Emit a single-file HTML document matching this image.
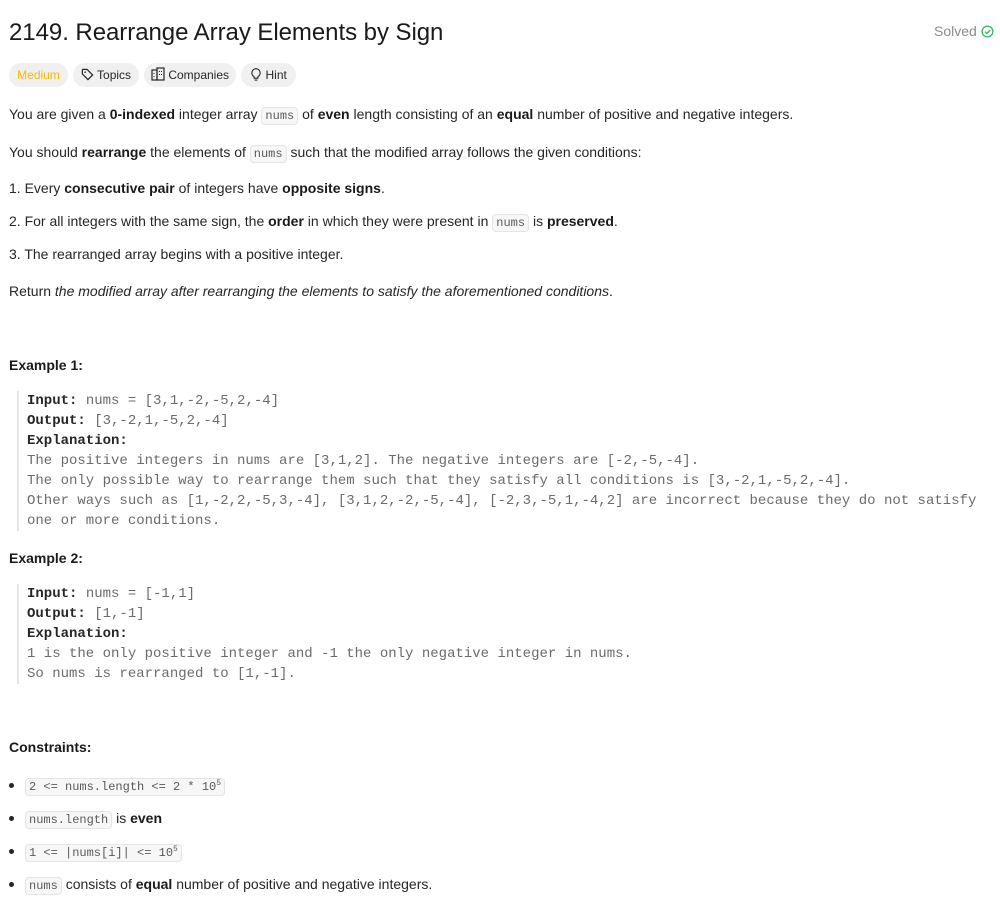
<!DOCTYPE html>
<html><head><meta charset="utf-8"><style>
body{margin:0;background:#fff;width:1000px;height:906px;position:relative;font-family:"Liberation Sans",sans-serif;font-size:14px;color:#262626;overflow:hidden}
.a{position:absolute;white-space:nowrap;line-height:20px}
code{font-family:"Liberation Mono",monospace;font-size:12px;background:#f7f7f8;border:1px solid #e5e5e5;border-radius:4px;padding:1px 3px;color:#5a5a5a}
sup{font-size:8px;line-height:0;vertical-align:5px}
b{font-weight:bold;color:#1a1a1a}
.tag{position:absolute;top:63px;height:24px;background:#f0f0f0;border-radius:12px;font-size:12px;line-height:24px;text-align:center;color:#262626;white-space:nowrap}
.pre{position:absolute;left:17px;border-left:2px solid #e5e5e5;padding-left:8px;font-family:"Liberation Mono",monospace;font-size:14px;line-height:20px;color:#6b6b6b;white-space:pre}
.pre b{color:#262626}
.dot{position:absolute;left:9px;width:5px;height:5px;border-radius:50%;background:#262626}
</style></head><body>
<div class="a" style="left:9px;top:17px;font-size:24px;line-height:32px;color:#1a1a1a;letter-spacing:-0.05px">2149. Rearrange Array Elements by Sign</div>
<div class="a" style="left:934px;top:21px;font-size:14px;color:#8c8c8c">Solved <svg width="13" height="13" viewBox="0 0 14 14" style="vertical-align:-2px"><circle cx="7" cy="7" r="5.8" fill="none" stroke="#2cbb5d" stroke-width="1.4"/><path d="M4.3 7.2l2 2 3.6-3.8" fill="none" stroke="#2cbb5d" stroke-width="1.4"/></svg></div>
<div class="tag" style="left:9px;width:59px;color:#ffb800">Medium</div>
<div class="tag" style="left:73px;width:66px"><svg width="13" height="13" viewBox="0 0 14 14" style="vertical-align:-2px"><path d="M1.5 2v4.5l6 6 5-5-6-6H2z" fill="none" stroke="#262626" stroke-width="1.3"/><circle cx="4.5" cy="4.5" r="0.9" fill="#262626"/></svg> Topics</div>
<div class="tag" style="left:144px;width:92px"><svg width="14" height="14" viewBox="0 0 14 14" style="vertical-align:-2px"><rect x="1" y="3" width="5" height="10" fill="none" stroke="#262626" stroke-width="1.2"/><rect x="6" y="1" width="7" height="12" fill="none" stroke="#262626" stroke-width="1.2"/><path d="M8.5 4v1M10.5 4v1M8.5 7v1M10.5 7v1M3 6v1M3 9v1" stroke="#262626"/></svg> Companies</div>
<div class="tag" style="left:241px;width:55px"><svg width="12" height="13" viewBox="0 0 12 14" style="vertical-align:-2px"><path d="M4 11V9.5C2.5 8.5 1.5 7 1.5 5.3a4.5 4.5 0 0 1 9 0C10.5 7 9.5 8.5 8 9.5V11zM4.5 13h3" fill="none" stroke="#262626" stroke-width="1.2"/></svg> Hint</div>
<div class="a" style="left:9px;top:104px">You are given a <b>0-indexed</b> integer array <code>nums</code> of <b>even</b> length consisting of an <b>equal</b> number of positive and negative integers.</div>
<div class="a" style="left:9px;top:142px">You should <b>rearrange</b> the elements of <code>nums</code> such that the modified array follows the given conditions:</div>
<div class="a" style="left:9px;top:178px">1. Every <b>consecutive pair</b> of integers have <b>opposite signs</b>.</div>
<div class="a" style="left:9px;top:211px">2. For all integers with the same sign, the <b>order</b> in which they were present in <code>nums</code> is <b>preserved</b>.</div>
<div class="a" style="left:9px;top:244px">3. The rearranged array begins with a positive integer.</div>
<div class="a" style="left:9px;top:281px">Return <i>the modified array after rearranging the elements to satisfy the aforementioned conditions</i>.</div>
<div class="a" style="left:9px;top:355px"><b>Example 1:</b></div>
<div class="pre" style="top:391px"><b>Input:</b> nums = [3,1,-2,-5,2,-4]
<b>Output:</b> [3,-2,1,-5,2,-4]
<b>Explanation:</b>
The positive integers in nums are [3,1,2]. The negative integers are [-2,-5,-4].
The only possible way to rearrange them such that they satisfy all conditions is [3,-2,1,-5,2,-4].
Other ways such as [1,-2,2,-5,3,-4], [3,1,2,-2,-5,-4], [-2,3,-5,1,-4,2] are incorrect because they do not satisfy
one or more conditions.</div>
<div class="a" style="left:9px;top:548px"><b>Example 2:</b></div>
<div class="pre" style="top:584px"><b>Input:</b> nums = [-1,1]
<b>Output:</b> [1,-1]
<b>Explanation:</b>
1 is the only positive integer and -1 the only negative integer in nums.
So nums is rearranged to [1,-1].</div>
<div class="a" style="left:9px;top:737px"><b>Constraints:</b></div>
<div class="dot" style="top:783px"></div><div class="a" style="left:25px;top:775px"><code>2 &lt;= nums.length &lt;= 2 * 10<sup>5</sup></code></div>
<div class="dot" style="top:816px"></div><div class="a" style="left:25px;top:808px"><code>nums.length</code> is <b>even</b></div>
<div class="dot" style="top:849px"></div><div class="a" style="left:25px;top:841px"><code>1 &lt;= |nums[i]| &lt;= 10<sup>5</sup></code></div>
<div class="dot" style="top:882px"></div><div class="a" style="left:25px;top:874px"><code>nums</code> consists of <b>equal</b> number of positive and negative integers.</div>
</body></html>
